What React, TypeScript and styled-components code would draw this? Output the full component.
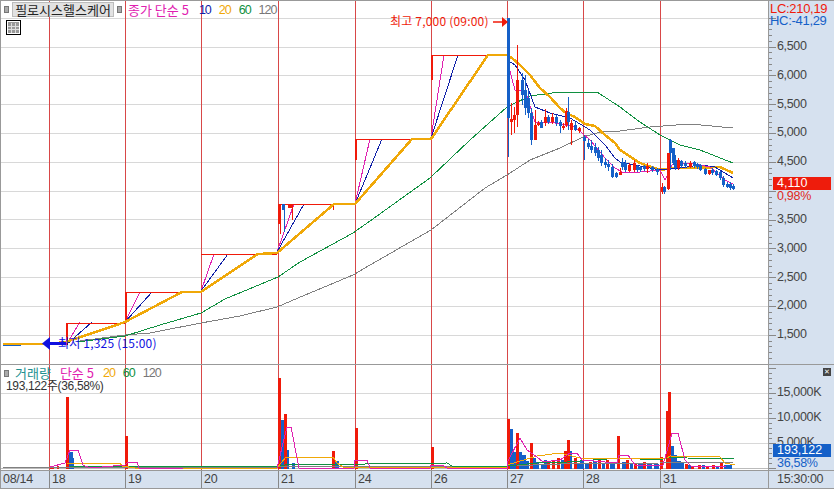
import React from "react";
import styled, { createGlobalStyle } from "styled-components";

const GlobalStyle = createGlobalStyle`
  html, body { margin: 0; padding: 0; background: #fff; }
  #root { width: 834px; height: 489px; overflow: hidden; }
`;

const FONT = `"Liberation Sans", "Noto Sans CJK KR", sans-serif`;
const KFONT = `"Noto Sans CJK KR", "Liberation Sans", sans-serif`;
const GRID = "#d8d8d8";
const RED = "#f01a0a";
const BLUE = "#1560c8";
const VLINE = "#d84848";

const Frame = styled.div`
  width: 834px; height: 489px; box-sizing: border-box; display: flex; flex-direction: column;
  border-top: 1px solid #999; border-left: 1px solid #999; border-bottom: 1px solid #999;
  background: #fff; font-family: ${FONT}; overflow: hidden;
`;
const PanelRow = styled.div<{ $h: number }>`
  display: flex; height: ${p => p.$h}px; flex: none;
`;
const Divider = styled.div`height: 1px; flex: none; background: #999;`;
const Plot = styled.div`
  position: relative; width: 767px; flex: none; background: #fff;
  svg { display: block; }
`;
const Axis = styled.div<{ $pad: number }>`
  position: relative; box-sizing: border-box; flex: none; width: 66px; background: #d6e1ef;
  border-left: 1px solid #999; padding-top: ${p => p.$pad}px;
`;
const AxisTicks = styled.svg`position: absolute; left: 0; top: 0;`;
const Readout = styled.div`
  position: absolute; left: 1px; top: 2px; font-size: 13px; line-height: 12px; letter-spacing: -0.3px;
`;
const ReadLine = styled.div<{ $c: string }>`color: ${p => p.$c}; white-space: nowrap;`;
const AxisLabel = styled.div<{ $h: number }>`
  position: relative; height: ${p => p.$h}px; line-height: ${p => p.$h}px; padding-left: 8px;
  font-size: 12.5px; color: #444; letter-spacing: -0.35px; white-space: nowrap;
`;
const Tag = styled.div<{ $top: number; $bg: string }>`
  position: absolute; left: 4px; top: ${p => p.$top}px; width: 58px; height: 13px; line-height: 13px;
  background: ${p => p.$bg}; color: #fff; font-size: 12.5px; padding-left: 4px; box-sizing: border-box;
`;
const SubTag = styled.div<{ $top: number; $c: string }>`
  position: absolute; left: 8px; top: ${p => p.$top}px; line-height: 12px;
  color: ${p => p.$c}; font-size: 12.5px; letter-spacing: -0.3px;
`;
const CloseBtn = styled.div`
  position: absolute; left: 54px; top: 3px; width: 8px; height: 8px; background: #444;
  color: #fff; font-size: 7px; line-height: 8px; text-align: center;
`;
const Legend = styled.div<{ $top: number; $left: number }>`
  position: absolute; top: ${p => p.$top}px; left: ${p => p.$left}px; display: flex; align-items: center;
  font-family: ${KFONT}; font-size: 13px; line-height: 14px; white-space: nowrap;
`;
const Handle = styled.span`
  width: 3px; height: 5px; background: #aaa; border: 1px solid #777; flex: none;
`;
const NameButton = styled.span`
  box-sizing: border-box; width: 102px; height: 15px; line-height: 13px; margin: 0 3px; text-align: center;
  background: #e2e2e2; border: 1px solid #bcbcbc; color: #222;
`;
const Item = styled.span<{ $c: string; $ml?: number }>`
  color: ${p => p.$c}; margin-left: ${p => p.$ml ?? 0}px;
`;
const Num = styled(Item)`
  font-family: ${FONT}; font-size: 12.5px; letter-spacing: -1px;
`;
const GridIcon = styled.svg`position: absolute; left: 5px; top: 19px;`;
const VolInfo = styled.div`
  position: absolute; left: 5px; top: 15px; font-size: 12px; line-height: 12px; color: #333;
  font-family: ${FONT}; letter-spacing: -0.35px; white-space: nowrap;
`;
const Note = styled.text<{ $c: string }>`
  font-family: ${KFONT}; font-size: 12px; letter-spacing: 0.2px; fill: ${p => p.$c};
`;
const DateBar = styled.div`
  display: flex; flex: 1; background: #d6e1ef; border-top: 1px solid #999;
`;
const DateCell = styled.div<{ $w: number }>`
  box-sizing: border-box; width: ${p => p.$w}px; flex: none; border-left: 1px solid #888;
  padding-left: 2px; font-size: 12.5px; line-height: 17px; color: #444; letter-spacing: -0.3px;
  &:first-child { border-left: none; }
`;
const TimeCell = styled(DateCell)`padding-left: 8px; border-left: 1px solid #999;`;

const days = [49, 125, 201, 278, 355, 431, 507, 583, 660];
const py = [18, 47, 75, 104, 133, 162, 191, 219, 248, 277, 306, 335];
const vy = [393, 418, 443];
const priceLabels = ["6,500", "6,000", "5,500", "5,000", "4,500", "", "3,500", "3,000", "2,500", "2,000", "1,500"];
const pts = (a: number[][]) => a.map(p => p.join(",")).join(" ");

const orange = [[3,344],[49,344],[66,342],[125,322],[182,292],[201,292],[258,254],[277,253],[334,204],[355,204],[412,139],[431,139],[488,55],[507,55],[512,58],[520,65],[530,75],[540,88],[550,97],[560,108],[566,113],[575,117],[585,124],[595,126],[605,135],[615,143],[620,150],[640,163],[660,170],[673,168],[687,168],[720,167],[733,173]];
const green = [[77,342],[125,336],[160,325],[201,313],[225,299],[278,277],[300,262],[353,233],[370,221],[430,178],[470,140],[507,107],[530,96],[560,92],[597,92],[620,107],[640,122],[660,135],[680,145],[700,150],[733,163]];
const gray = [[80,341],[125,335],[150,333],[201,323],[240,316],[277,307],[298,298],[353,275],[370,265],[431,230],[485,188],[507,175],[530,160],[560,148],[583,137],[600,132],[620,131],[650,127],[690,124],[733,128]];
const blue2 = [[507,60],[515,65],[525,80],[535,107],[550,113],[570,118],[590,130],[605,145],[615,158],[620,162],[660,170],[680,168],[700,165],[715,167],[733,178]];
const mag2 = [[507,60],[515,90],[525,90],[535,122],[550,122],[575,127],[590,140],[605,158],[615,168],[622,172],[640,172],[660,170],[665,180],[672,165],[690,163],[710,167],[725,180],[733,184]];
const fans = [
  [66,345,80,322,92],[125,322,140,292,152],[201,291,214,254,228],
  [277,252,294,204,304],[355,204,370,139,382],[431,138,444,55,458],
];
const steps = [[66,323,125,345],[125,292,201,322],[201,254,277,254],[278,204,355,224],[355,139,431,160],[431,55,507,80]];

// x, wickTop, wickBottom, bodyTop, bodyBottom, up
const candles: [number, number, number, number, number, number][] = [
  [511,103,135,119,122,1],[514,107,133,115,120,1],[517,45,127,80,115,1],[522,73,105,80,95,0],[525,75,115,90,108,0],
  [528,90,118,98,113,0],[531,108,145,113,140,0],[535,110,140,125,140,1],[538,121,126,123,125,1],[541,120,128,122,128,0],
  [545,109,126,117,123,1],[548,115,124,117,122,0],[552,113,124,117,122,1],[556,115,126,117,123,0],[560,120,133,122,126,0],
  [563,123,130,126,128,1],[566,108,127,111,125,1],[568,97,130,112,122,0],[571,120,145,123,130,1],[575,122,131,125,130,0],
  [579,127,133,128,131,1],[584,135,160,137,141,0],[588,139,149,143,147,0],[591,140,153,146,150,0],[595,143,156,147,153,0],
  [598,147,161,150,158,0],[601,150,166,155,163,0],[605,158,168,162,165,0],[608,160,171,164,167,0],[612,164,178,167,177,0],
  [616,172,178,173,177,0],[620,168,175,172,175,1],[622,158,170,162,167,0],[625,160,172,163,170,0],[629,163,172,165,171,1],
  [634,160,172,163,170,1],[637,165,172,166,170,0],[640,166,172,167,170,0],[644,165,171,166,169,0],[647,163,173,166,169,1],
  [652,166,172,167,170,0],[657,168,175,169,172,0],[662,183,194,187,192,1],[664,186,194,187,192,0],[668,153,190,153,189,1],
  [670,139,170,140,153,0],[673,148,165,148,163,0],[675,155,170,160,168,0],[678,158,170,160,168,1],[681,160,168,161,166,0],
  [685,161,168,163,166,0],[690,161,168,163,167,1],[694,161,168,162,166,0],[697,163,169,164,167,0],[700,164,171,165,170,0],
  [705,168,175,169,174,0],[709,170,175,170,174,1],[712,168,175,170,173,0],[716,170,176,171,175,0],[720,171,180,172,178,0],
  [723,176,187,178,185,0],[727,182,188,184,187,0],[730,182,190,184,188,0],[733,184,190,186,189,0],
];
const redBars = [[50,466,4],[57,466,2],[66,397,3],[125,436,3],[278,378,3],[284,414,3],[332,451,3],[355,428,3],[431,447,3],[507,419,3],[516,433,3],[530,443,3],[547,463,3],[552,461,3],[557,458,3],[567,440,3],[564,451,3],[574,458,3],[589,462,3],[598,459,3],[606,460,3],[617,436,3],[626,460,3],[634,464,3],[643,462,3],[660,457,3],[666,411,2],[668,392,3],[685,464,3],[691,466,3],[698,465,3],[706,466,3],[712,465,3],[720,463,3]];
const blueBars = [[68,452,5],[71,458,3],[281,420,3],[287,450,2],[292,463,3],[335,461,4],[510,429,3],[513,452,3],[519,452,3],[522,455,4],[526,461,3],[533,458,3],[536,462,3],[541,464,3],[544,460,3],[561,460,3],[569,451,3],[577,463,3],[580,460,4],[585,464,4],[593,461,4],[602,463,3],[610,463,5],[622,462,4],[630,464,3],[638,463,5],[647,464,5],[654,464,5],[671,446,3],[674,455,3],[677,461,4],[681,463,3],[688,465,3],[702,465,3],[716,466,3],[724,465,8]];
const vMag = [[277,468],[287,427],[291,427],[299,468],[354,468],[355,460],[367,460],[370,468],[430,468],[431,465],[443,465],[447,468],[507,468],[507,463],[520,438],[527,450],[537,457],[543,462],[560,460],[570,453],[577,453],[582,460],[617,463],[619,455],[628,455],[635,465],[663,465],[672,433],[678,433],[685,460],[692,467],[727,466]];
const vMagA = [[50,467],[65,463],[70,450],[78,450],[83,465],[90,468],[125,465],[128,462],[137,462],[139,468],[183,468]];
const vOrg = [[67,463],[120,463],[122,466],[135,468],[200,468],[260,468],[277,468],[286,457],[333,457],[337,463],[343,467],[507,467],[507,465],[537,456],[560,453],[580,458],[617,459],[667,458],[670,456],[720,457],[725,463],[735,465]];
const vGrn = [[70,466],[200,466],[277,466],[285,465],[447,463],[452,466],[507,466],[537,463],[567,462],[620,458],[660,460],[670,457],[687,458],[734,459]];
const vGry = [[3,467],[277,467],[507,466],[560,464],[660,463],[734,462]];

const Line = ({ d, c, w = 1 }: { d: number[][]; c: string; w?: number }) => (
  <polyline points={pts(d)} fill="none" stroke={c} strokeWidth={w} shapeRendering="crispEdges" />
);

const MainChart = () => (
  <svg width={767} height={363} viewBox="1 1 767 363">
    <g shapeRendering="crispEdges">
      {py.map(y => <line key={y} x1={1} x2={768} y1={y + 0.5} y2={y + 0.5} stroke={GRID} />)}
      {days.map(x => <line key={x} x1={x + 0.5} x2={x + 0.5} y1={1} y2={364} stroke={VLINE} />)}
    </g>
    <Line d={gray} c="#808080" />
    <Line d={green} c="#109040" />
    {fans.map(([x, y, mx, my, bx], i) => (
      <g key={i}>
        <Line d={[[x, y], [mx, my]]} c="#e020b0" />
        <Line d={[[x, y], [bx, my]]} c="#1020a8" />
      </g>
    ))}
    <g shapeRendering="crispEdges">
      <rect x={3} y={343} width={46} height={1} fill={RED} />
      <rect x={3} y={345} width={18} height={1} fill={BLUE} />
      {steps.map(([x, y, x2, yb], i) => (
        <g key={i}>
          <rect x={x} y={y} width={x2 - x} height={1} fill={RED} />
          <rect x={x} y={y} width={2} height={yb - y} fill={RED} />
        </g>
      ))}
      <rect x={282} y={204} width={3} height={6} fill={BLUE} />
      <rect x={284} y={204} width={1} height={28} fill={BLUE} />
      <rect x={288} y={204} width={4} height={4} fill={RED} />
      <rect x={280} y={204} width={1} height={30} fill={RED} />
      <rect x={292} y={204} width={1} height={16} fill={RED} />
      <rect x={333} y={204} width={1} height={6} fill={RED} />
    </g>
    <Line d={orange} c="#f0a808" w={2.5} />
    <Line d={blue2} c="#1020a8" />
    <Line d={mag2} c="#e020b0" />
    <g shapeRendering="crispEdges">
      <rect x={507} y={18} width={3} height={100} fill={BLUE} />
      <rect x={508} y={118} width={1} height={39} fill={BLUE} />
      {candles.map(([x, t, b, bt, bb, up], i) => (
        <g key={i} fill={up ? RED : BLUE}>
          <rect x={x} y={t} width={1} height={b - t} />
          <rect x={x - 1} y={bt} width={3} height={bb - bt} />
        </g>
      ))}
    </g>
    <Note $c={RED} x={390} y={26}>최고 7,000 (09:00)</Note>
    <path d="M493 22H503" stroke={RED} strokeWidth={1.5} />
    <path d="M502 17L508 22L502 27Z" fill={RED} />
    <path d="M42 343.5L50 337V350Z" fill="#1010e0" />
    <rect x={48} y={342} width={18} height={3} fill="#1010e0" />
    <Note $c="#1010e0" x={58} y={348}>최저 1,325 (15:00)</Note>
  </svg>
);

const VolumeChart = () => (
  <svg width={767} height={105} viewBox="1 365 767 105">
    <g shapeRendering="crispEdges">
      {vy.map(y => <line key={y} x1={1} x2={768} y1={y + 0.5} y2={y + 0.5} stroke={GRID} />)}
      <line x1={1} x2={768} y1={468.5} y2={468.5} stroke="#bbb" />
      {days.map(x => <line key={x} x1={x + 0.5} x2={x + 0.5} y1={365} y2={470} stroke={VLINE} />)}
      {blueBars.map(([x, y, w], i) => <rect key={i} x={x} y={y} width={w} height={469 - y} fill={BLUE} />)}
      {redBars.map(([x, y, w], i) => <rect key={i} x={x} y={y} width={w} height={469 - y} fill={RED} />)}
    </g>
    <Line d={vGry} c="#808080" />
    <Line d={vGrn} c="#109040" />
    <Line d={vOrg} c="#f0a808" />
    <Line d={vMagA} c="#e020b0" />
    <Line d={vMag} c="#e020b0" />
  </svg>
);

const ticks = (h: number, first: number, step: number, major: number) => {
  const out: React.ReactElement[] = [];
  let i = 0;
  for (let y = first; y < h; y += step, i++) {
    const isMajor = i % major === 0;
    out.push(<line key={y} x1={0} x2={isMajor ? 7 : 3} y1={Math.floor(y) + 0.5} y2={Math.floor(y) + 0.5} stroke="#888" />);
  }
  return out;
};

const dateCells: [string, number][] = [["08/14", 48], ["18", 76], ["19", 76], ["20", 77], ["21", 77], ["24", 76], ["26", 76], ["27", 76], ["28", 77], ["31", 108]];

export default function App() {
  return (
    <>
      <GlobalStyle />
      <Frame>
        <PanelRow $h={363}>
          <Plot>
            <MainChart />
            <Legend $top={1} $left={3}>
              <Handle />
              <NameButton>필로시스헬스케어</NameButton>
              <Handle />
              <Item $c="#e020b0" $ml={6}>종가 단순 5</Item>
              <Num $c="#1020a8" $ml={10}>10</Num>
              <Num $c="#f0a808" $ml={8}>20</Num>
              <Num $c="#109040" $ml={8}>60</Num>
              <Num $c="#777" $ml={8}>120</Num>
            </Legend>
            <GridIcon width={15} height={15} viewBox="0 0 15 15">
              <rect x={0.5} y={0.5} width={14} height={14} fill="#fff" stroke="#000" />
              <rect x={2} y={2} width={11} height={11} fill="#999" />
              <path d="M2 6H13M2 9.5H13M5.5 3V13M9.5 3V13" stroke="#ddd" strokeWidth={1} shapeRendering="crispEdges" />
            </GridIcon>
          </Plot>
          <Axis $pad={31}>
            <AxisTicks width={65} height={363} viewBox="0 0 65 363" shapeRendering="crispEdges">
              {ticks(363, 17.3, 5.766, 5)}
            </AxisTicks>
            <Readout>
              <ReadLine $c="#f01a0a">LC:210,19</ReadLine>
              <ReadLine $c="#1560c8">HC:-41,29</ReadLine>
            </Readout>
            {priceLabels.map((l, i) => <AxisLabel key={i} $h={28.83}>{l}</AxisLabel>)}
            <Tag $top={176} $bg="#ee1c0c">4,110</Tag>
            <SubTag $top={189} $c="#e0281c">0,98%</SubTag>
          </Axis>
        </PanelRow>
        <Divider />
        <PanelRow $h={105}>
          <Plot>
            <VolumeChart />
            <Legend $top={1} $left={3}>
              <Handle />
              <Item $c="#209090" $ml={6}>거래량</Item>
              <Item $c="#e020b0" $ml={9}>단순 5</Item>
              <Num $c="#f0a808" $ml={9}>20</Num>
              <Num $c="#109040" $ml={8}>60</Num>
              <Num $c="#777" $ml={8}>120</Num>
            </Legend>
            <VolInfo>193,122주(36,58%)</VolInfo>
          </Plot>
          <Axis $pad={15}>
            <AxisTicks width={65} height={105} viewBox="0 0 65 105" shapeRendering="crispEdges">
              {ticks(105, 3, 5, 5)}
            </AxisTicks>
            <AxisLabel $h={25}>15,000K</AxisLabel>
            <AxisLabel $h={25}>10,000K</AxisLabel>
            <AxisLabel $h={25}>5,000K</AxisLabel>
            <CloseBtn>✕</CloseBtn>
            <Tag $top={79} $bg="#1560c8">193,122</Tag>
            <SubTag $top={92} $c="#1560c8">36,58%</SubTag>
          </Axis>
        </PanelRow>
        <DateBar>
          {dateCells.map(([t, w]) => <DateCell key={t} $w={w}>{t}</DateCell>)}
          <TimeCell $w={66}>15:30:00</TimeCell>
        </DateBar>
      </Frame>
    </>
  );
}
